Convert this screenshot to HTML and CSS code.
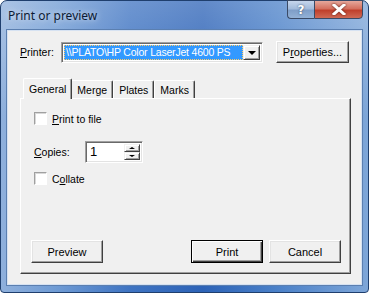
FILE: index.html
```html
<!DOCTYPE html>
<html lang="en">
<head>
    <meta charset="UTF-8">
    <title>Print or preview</title>
    <link rel="stylesheet" href="styles.css">
</head>
<body>
    <div class="window">
        <div class="titlebar">
            <span class="title">Print or preview</span>
            <div class="caption-btns">
                <div class="cap help">?</div>
                <div class="cap close">
                    <svg width="14" height="11" viewBox="0 0 14 11"><path d="M2 1 L12 10 M12 1 L2 10" stroke="#fff" stroke-width="3" stroke-linecap="square"/></svg>
                </div>
            </div>
        </div>

        <div class="client">
            <div class="printer-row">
                <label class="lbl"><u>P</u>rinter:</label>
                <div class="combo">
                    <span class="combo-text">\\PLATO\HP Color LaserJet 4600 PS</span>
                    <span class="combo-arrow"><span class="tri-down"></span></span>
                </div>
                <button class="btn props">P<u>r</u>operties...</button>
            </div>

            <div class="tabs">
                <div class="tab active">General</div>
                <div class="tab">Merge</div>
                <div class="tab">Plates</div>
                <div class="tab">Marks</div>
            </div>

            <div class="panel">
                <div class="check-row">
                    <span class="checkbox"></span>
                    <span><u>P</u>rint to file</span>
                </div>

                <div class="copies-row">
                    <span class="copies-lbl"><u>C</u>opies:</span>
                    <div class="spin">
                        <span class="spin-text">1</span>
                        <div class="spin-btns">
                            <span class="spin-btn"><span class="tri-up"></span></span>
                            <span class="spin-btn"><span class="tri-down small"></span></span>
                        </div>
                    </div>
                </div>

                <div class="check-row collate">
                    <span class="checkbox"></span>
                    <span>C<u>o</u>llate</span>
                </div>

                <div class="btn-row">
                    <button class="btn">Preview</button>
                    <div class="spacer"></div>
                    <button class="btn default">Print</button>
                    <button class="btn">Cancel</button>
                </div>
            </div>
        </div>
    </div>
</body>
</html>
```

FILE: styles.css
```css
/* Finestra */
body {
    margin: 0;
    background: #ffffff;
    font-family: "Liberation Sans", Arial, sans-serif;
    font-size: 10.5px;
    color: #000;
}

.window {
    width: 369px;
    height: 293px;
    box-sizing: border-box;
    border: 1px solid #1f3f6e;
    border-radius: 7px 7px 4px 4px;
    padding: 0 6px 7px 6px;
    background:
        linear-gradient(180deg, rgba(255,255,255,0.25) 0%, rgba(255,255,255,0) 40%),
        linear-gradient(90deg, #8fb0dc 0%, #6f9bd4 15%, #3f74c2 35%, #2d63b7 55%, #4a80c8 75%, #7ea6d8 100%);
    display: flex;
    flex-direction: column;
}

/* Barra del titolo */
.titlebar {
    height: 29px;
    display: flex;
    align-items: flex-start;
}

.title {
    font-family: "Noto Sans", "Open Sans", sans-serif;
    font-size: 12px;
    color: #0c1a33;
    margin: 6px 0 0 1px;
    text-shadow: 0 0 6px rgba(255,255,255,0.8);
}

.caption-btns {
    margin-left: auto;
    margin-right: -1px;
    margin-top: -1px;
    display: flex;
}

.cap {
    height: 19px;
    box-sizing: border-box;
    border: 1px solid #3a4a66;
    display: flex;
    align-items: center;
    justify-content: center;
    color: #fff;
    font-family: "DejaVu Sans", sans-serif;
    font-weight: bold;
    font-size: 12px;
}

.help {
    width: 27px;
    border-radius: 0 0 0 4px;
    border-right: none;
    background: linear-gradient(180deg, #c6d6ec 0%, #a3bbdb 45%, #7f9ec8 55%, #93b1d6 100%);
    text-shadow: 0 0 2px #2a3a55;
}

.close {
    width: 49px;
    border-radius: 0 0 4px 0;
    background: linear-gradient(180deg, #e6a89c 0%, #d4705f 45%, #c0402c 55%, #cf6a55 100%);
}

.close svg {
    filter: drop-shadow(0 0 1px #5a1a10);
}

/* Area client */
.client {
    flex: 1;
    background: #f0f0f0;
    border: 1px solid #d6e2f2;
    outline: 1px solid #5b7fb0;
    padding: 10px 0 0 12px;
    display: flex;
    flex-direction: column;
}

.printer-row {
    display: flex;
    align-items: center;
    height: 22px;
}

.lbl {
    width: 41px;
}

.combo {
    width: 202px;
    height: 21px;
    box-sizing: border-box;
    border: 1px solid;
    border-color: #a0a0a0 #fff #fff #a0a0a0;
    box-shadow: inset 1px 1px #696969, inset -1px -1px #e3e3e3;
    background: #fff;
    padding: 2px;
    display: flex;
    margin-top: 1px;
}

.combo-text {
    flex: 1;
    background: #3399ff;
    color: #fff;
    padding-left: 2px;
    line-height: 15px;
    white-space: nowrap;
    overflow: hidden;
    letter-spacing: -0.2px;
    outline: 1px dotted #ffcc66;
    outline-offset: -1px;
}

.combo-arrow {
    width: 17px;
    box-sizing: border-box;
    background: #f0f0f0;
    border: 1px solid;
    border-color: #f0f0f0 #404040 #404040 #f0f0f0;
    box-shadow: inset 1px 1px #fff, inset -1px -1px #a0a0a0;
    display: flex;
    align-items: center;
    justify-content: center;
}

.tri-down {
    width: 0;
    height: 0;
    border-left: 4px solid transparent;
    border-right: 4px solid transparent;
    border-top: 4px solid #000;
}

.tri-down.small,
.tri-up {
    border-left-width: 3px;
    border-right-width: 3px;
}

.tri-down.small {
    border-top-width: 2px;
}

.tri-up {
    width: 0;
    height: 0;
    border-left: 3px solid transparent;
    border-right: 3px solid transparent;
    border-bottom: 2px solid #000;
}

/* Bottoni classici */
.btn {
    font-family: "Liberation Sans", Arial, sans-serif;
    font-size: 11px;
    color: #000;
    background: #f0f0f0;
    width: 72px;
    height: 23px;
    box-sizing: border-box;
    border: 1px solid;
    border-color: #fff #404040 #404040 #fff;
    box-shadow: inset -1px -1px #a0a0a0, inset 1px 1px #e3e3e3;
    padding: 0;
    border-radius: 0;
}

.btn.props {
    width: 73px;
    margin-left: 13px;
    height: 22px;
}

.btn.default {
    border: 1px solid #000;
    box-shadow: inset 1px 1px #fff, inset -1px -1px #404040, inset -2px -2px #a0a0a0;
}

/* Schede */
.tabs {
    display: flex;
    align-items: flex-end;
    margin: 15px 0 0 3px;
    height: 20px;
    position: relative;
    z-index: 1;
}

.tab {
    height: 18px;
    box-sizing: border-box;
    border: 1px solid;
    border-bottom: none;
    border-color: #fff #404040 #404040 #fff;
    box-shadow: inset -1px 0 #a0a0a0;
    border-radius: 2px 2px 0 0;
    padding: 3px 5px 0 5px;
    background: #f0f0f0;
}

.tab.active {
    height: 21px;
    margin-bottom: -1px;
    padding: 4px 5px 0 5px;
    margin-right: -2px;
    position: relative;
    z-index: 2;
}

.tab.active + .tab {
    padding-left: 6px;
}

/* Pannello */
.panel {
    width: 331px;
    height: 176px;
    box-sizing: border-box;
    border: 1px solid;
    border-color: #fff #404040 #404040 #fff;
    box-shadow: inset -1px -1px #a0a0a0;
    padding: 13px 13px 10px 13px;
    display: flex;
    flex-direction: column;
}

.check-row {
    display: flex;
    align-items: center;
    height: 13px;
}

.checkbox {
    width: 13px;
    height: 13px;
    box-sizing: border-box;
    border: 1px solid;
    border-color: #a0a0a0 #fff #fff #a0a0a0;
    box-shadow: inset 1px 1px #d8d8d8;
    background: #fff;
    margin-right: 5px;
}

.copies-row {
    display: flex;
    align-items: center;
    margin-top: 16px;
    height: 22px;
}

.copies-lbl {
    width: 51px;
}

.spin {
    width: 58px;
    height: 22px;
    box-sizing: border-box;
    border: 1px solid;
    border-color: #a0a0a0 #fff #fff #a0a0a0;
    box-shadow: inset 1px 1px #696969, inset -1px -1px #e3e3e3;
    background: #fff;
    display: flex;
    padding: 2px;
}

.spin-text {
    flex: 1;
    font-size: 13px;
    line-height: 16px;
    padding-left: 2px;
}

.spin-btns {
    width: 16px;
    display: flex;
    flex-direction: column;
}

.spin-btn {
    flex: 1;
    box-sizing: border-box;
    background: #f0f0f0;
    border: 1px solid;
    border-color: #f0f0f0 #404040 #404040 #f0f0f0;
    box-shadow: inset 1px 1px #fff, inset -1px -1px #a0a0a0;
    display: flex;
    align-items: center;
    justify-content: center;
}

.collate {
    margin-top: 9px;
}

.btn-row {
    margin: auto -4px 0 -3px;
    display: flex;
    gap: 6px;
}

.spacer {
    flex: 1;
}
```
